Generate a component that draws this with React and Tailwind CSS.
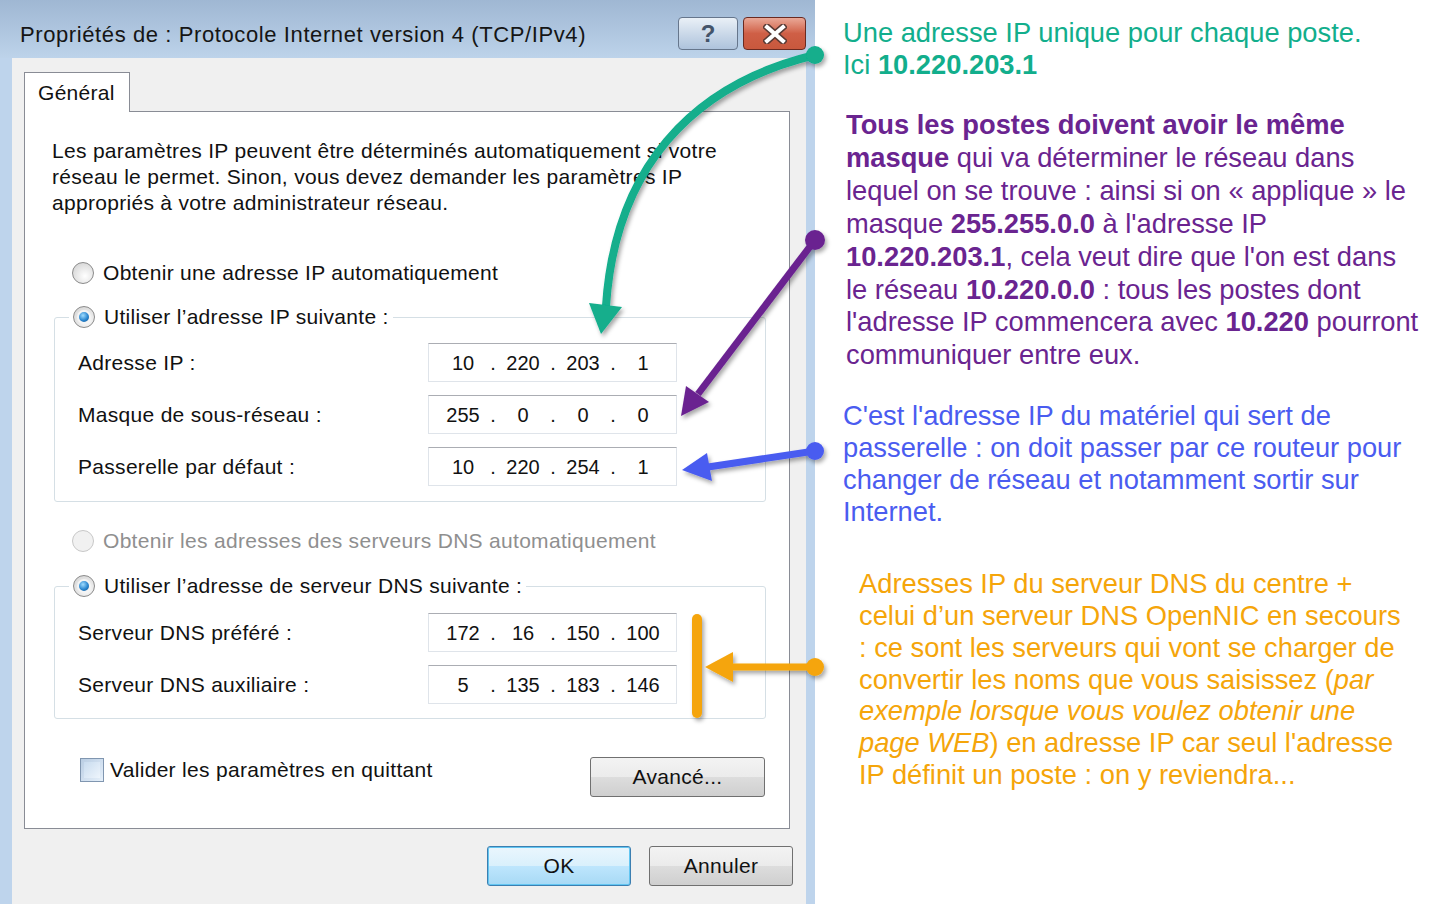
import React from 'react';

const Radio = ({ checked, disabled }) => (
    <span
        className={`w-[22px] h-[22px] rounded-full border shrink-0 flex items-center justify-center ${
            disabled
                ? 'border-[#c8c8c8] bg-[#f1f1f1]'
                : 'border-[#8b8b8b] bg-[radial-gradient(circle_at_60%_65%,#ffffff,#dcdcdc_70%,#c9c9c9)]'
        }`}
    >
        {checked && (
            <span className="w-[14px] h-[14px] rounded-full border-2 border-[#f4f4f4] bg-[radial-gradient(circle_at_40%_35%,#9fdcff,#2a86cf_55%,#0b4e8c)]" />
        )}
    </span>
);

const IpBox = ({ parts }) => (
    <div className="w-[249px] h-[39px] bg-white border border-[#dfe4ea] border-t-[#abadb3] flex items-center pl-[10px] text-[20px] tracking-normal text-[#111]">
        {parts.map((p, i) => (
            <React.Fragment key={i}>
                {i > 0 && <span className="w-[12px] text-center">.</span>}
                <span className="w-[48px] text-center">{p}</span>
            </React.Fragment>
        ))}
    </div>
);

const Row = ({ label, parts }) => (
    <div className="flex items-center pl-[23px]">
        <span className="w-[350px]">{label}</span>
        <IpBox parts={parts} />
    </div>
);

const GroupBox = ({ legend, children, className }) => (
    <div className={`relative ml-[29px] w-[712px] border border-[#d5dfe5] rounded-[3px] ${className}`}>
        <div className="absolute left-[14px] -top-[16px] h-[30px] flex items-center gap-[9px] px-[4px] bg-white">
            <Radio checked />
            <span>{legend}</span>
        </div>
        {children}
    </div>
);

const Button = ({ children, className }) => (
    <div
        className={`h-[40px] rounded-[3px] border flex items-center justify-center text-[21px] text-[#111] ${className}`}
    >
        {children}
    </div>
);

const Arrows = () => (
    <svg className="absolute left-0 top-0 pointer-events-none" width="1451" height="904" viewBox="0 0 1451 904">
        <defs>
            <filter id="sh" x="-20%" y="-20%" width="140%" height="140%">
                <feDropShadow dx="2" dy="3" stdDeviation="2" floodColor="#000" floodOpacity="0.35" />
            </filter>
        </defs>
        <g filter="url(#sh)">
            <path d="M815 55 C690 85 615 170 606 306" fill="none" stroke="#12ae8c" strokeWidth="8" />
            <circle cx="815" cy="55" r="9" fill="#12ae8c" />
            <polygon points="589,303 622,307 601,334" fill="#12ae8c" />

            <line x1="815" y1="240" x2="698" y2="394" stroke="#6a2490" strokeWidth="7" />
            <circle cx="815" cy="240" r="10" fill="#6a2490" />
            <polygon points="709,402 686,386 681,416" fill="#6a2490" />

            <line x1="815" y1="451" x2="708" y2="467" stroke="#4a5cf0" strokeWidth="7" />
            <circle cx="815" cy="451" r="9" fill="#4a5cf0" />
            <polygon points="707,453 712,481 682,470" fill="#4a5cf0" />

            <line x1="697" y1="619" x2="697" y2="713" stroke="#f5a50a" strokeWidth="10" strokeLinecap="round" />
            <line x1="815" y1="667" x2="730" y2="667" stroke="#f5a50a" strokeWidth="7" />
            <circle cx="815" cy="667" r="9" fill="#f5a50a" />
            <polygon points="733,652 733,682 705,667" fill="#f5a50a" />
        </g>
    </svg>
);

const App = () => {
    return (
        <div className="relative w-[1451px] h-[904px] bg-white flex overflow-hidden font-['Liberation_Sans',Arial,sans-serif]">
            {/* dialog */}
            <div className="w-[815px] h-[904px] flex flex-col bg-[#bed4ec]">
                <div className="h-[58px] shrink-0 flex items-start pl-[20px] pr-[9px] bg-gradient-to-b from-[#9fb7d3] to-[#bdd3ea]">
                    <span className="mt-[21px] text-[22px] leading-[28px] tracking-[0.6px] text-[#151515]">
                        Propriétés de : Protocole Internet version 4 (TCP/IPv4)
                    </span>
                    <div className="ml-auto mt-[17px] flex gap-[5px]">
                        <div className="w-[60px] h-[33px] rounded-[4px] border border-[#66768c] bg-gradient-to-b from-[#eaf0f7] via-[#cbd9e9] to-[#aec3dc] flex items-center justify-center text-[24px] font-bold text-[#44546a]">
                            ?
                        </div>
                        <div className="w-[63px] h-[33px] rounded-[4px] border border-[#6a2a20] bg-gradient-to-b from-[#e9a897] via-[#cf5f46] to-[#c8583d] flex items-center justify-center">
                            <svg width="24" height="20" viewBox="0 0 24 20">
                                <path d="M4 3 L20 17 M20 3 L4 17" stroke="#5a3a34" strokeWidth="7" strokeLinecap="square" />
                                <path d="M4 3 L20 17 M20 3 L4 17" stroke="#ffffff" strokeWidth="4" strokeLinecap="square" />
                            </svg>
                        </div>
                    </div>
                </div>

                <div className="flex-1 ml-[12px] mr-[9px] bg-[#f0f0f0] flex flex-col text-[21px] tracking-[0.3px] text-[#111]">
                    <div className="relative z-10 ml-[12px] mt-[14px] -mb-px w-[106px] h-[40px] border border-b-0 border-[#898c95] bg-white flex items-center pl-[13px]">
                        Général
                    </div>
                    <div className="ml-[12px] w-[766px] h-[718px] border border-[#898c95] bg-white flex flex-col">
                        <p className="mt-[26px] pl-[27px] leading-[26px]">
                            Les paramètres IP peuvent être déterminés automatiquement si votre
                            <br />
                            réseau le permet. Sinon, vous devez demander les paramètres IP
                            <br />
                            appropriés à votre administrateur réseau.
                        </p>

                        <div className="mt-[42px] h-[30px] pl-[47px] flex items-center gap-[9px]">
                            <Radio />
                            <span>Obtenir une adresse IP automatiquement</span>
                        </div>

                        <GroupBox legend="Utiliser l’adresse IP suivante :" className="mt-[29px] h-[185px] pt-[25px] flex flex-col gap-[13px]">
                            <Row label="Adresse IP :" parts={['10', '220', '203', '1']} />
                            <Row label="Masque de sous-réseau :" parts={['255', '0', '0', '0']} />
                            <Row label="Passerelle par défaut :" parts={['10', '220', '254', '1']} />
                        </GroupBox>

                        <div className="mt-[24px] h-[30px] pl-[47px] flex items-center gap-[9px] text-[#8f8f8f]">
                            <Radio disabled />
                            <span>Obtenir les adresses des serveurs DNS automatiquement</span>
                        </div>

                        <GroupBox legend="Utiliser l’adresse de serveur DNS suivante :" className="mt-[30px] h-[133px] pt-[26px] flex flex-col gap-[13px]">
                            <Row label="Serveur DNS préféré :" parts={['172', '16', '150', '100']} />
                            <Row label="Serveur DNS auxiliaire :" parts={['5', '135', '183', '146']} />
                        </GroupBox>

                        <div className="mt-[38px] flex items-start pl-[55px] pr-[24px]">
                            <div className="h-[25px] flex items-center gap-[6px]">
                                <span className="w-[24px] h-[24px] border border-[#8096b0] bg-gradient-to-br from-[#b9cde3] to-[#e6f0fa] p-[3px]">
                                    <span className="block w-full h-full bg-gradient-to-br from-[#c9dcef] to-[#eef5fc]" />
                                </span>
                                <span>Valider les paramètres en quittant</span>
                            </div>
                            <Button className="ml-auto w-[175px] border-[#707070] bg-[linear-gradient(#f3f3f3,#ebebeb_50%,#dddddd_50%,#cfcfcf)]">
                                Avancé...
                            </Button>
                        </div>
                    </div>

                    <div className="mt-[17px] flex justify-end gap-[18px] pr-[13px]">
                        <Button className="w-[144px] border-[#3c7fb1] bg-[linear-gradient(#eaf6fd,#d9f0fc_50%,#bee6fd_50%,#a7d9f5)] shadow-[inset_0_0_0_1px_#62c6f2]">
                            OK
                        </Button>
                        <Button className="w-[144px] border-[#707070] bg-[linear-gradient(#f3f3f3,#ebebeb_50%,#dddddd_50%,#cfcfcf)]">
                            Annuler
                        </Button>
                    </div>
                </div>
            </div>

            {/* annotations */}
            <div className="flex-1 flex flex-col text-[27.3px]">
                <p className="mt-[17px] pl-[28px] leading-[32px] text-[#12ae8c]">
                    Une adresse IP unique pour chaque poste.
                    <br />
                    Ici <b>10.220.203.1</b>
                </p>
                <p className="mt-[28px] pl-[31px] leading-[32.9px] text-[#6a2490]">
                    <b>Tous les postes doivent avoir le même</b>
                    <br />
                    <b>masque</b> qui va déterminer le réseau dans
                    <br />
                    lequel on se trouve : ainsi si on « applique » le
                    <br />
                    masque <b>255.255.0.0</b> à l'adresse IP
                    <br />
                    <b>10.220.203.1</b>, cela veut dire que l'on est dans
                    <br />
                    le réseau <b>10.220.0.0</b> : tous les postes dont
                    <br />
                    l'adresse IP commencera avec <b>10.220</b> pourront
                    <br />
                    communiquer entre eux.
                </p>
                <p className="mt-[28px] pl-[28px] leading-[32px] text-[#4a5cf0]">
                    C'est l'adresse IP du matériel qui sert de
                    <br />
                    passerelle : on doit passer par ce routeur pour
                    <br />
                    changer de réseau et notamment sortir sur
                    <br />
                    Internet.
                </p>
                <p className="mt-[40px] pl-[44px] leading-[31.8px] text-[#f5a50a]">
                    Adresses IP du serveur DNS du centre +
                    <br />
                    celui d’un serveur DNS OpenNIC en secours
                    <br />
                    : ce sont les serveurs qui vont se charger de
                    <br />
                    convertir les noms que vous saisissez (<i>par</i>
                    <br />
                    <i>exemple lorsque vous voulez obtenir une</i>
                    <br />
                    <i>page WEB</i>) en adresse IP car seul l'adresse
                    <br />
                    IP définit un poste : on y reviendra...
                </p>
            </div>

            <Arrows />
        </div>
    );
};

export default App;
